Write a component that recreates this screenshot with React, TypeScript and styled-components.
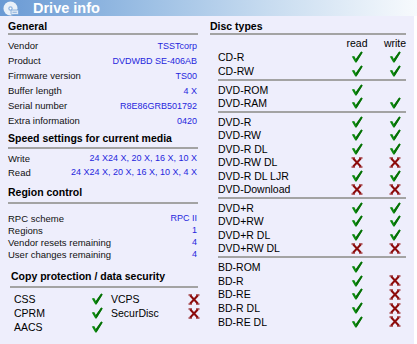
import React from 'react';
import styled, { createGlobalStyle } from 'styled-components';

const Global = createGlobalStyle`
  html, body { margin: 0; padding: 0; background: #eeeefc; }
  body { font-family: "Liberation Sans", Arial, sans-serif; color: #000; }
`;

const Window = styled.div`
  width: 417px;
  height: 344px;
  background: #eeeefc;
  display: flex;
  flex-direction: column;
  overflow: hidden;
`;

const TitleBar = styled.div`
  height: 16px;
  flex: none;
  display: flex;
  align-items: center;
  background: linear-gradient(to right, #6a9ad4 0%, #9cbfe4 35%, #c8dcf0 65%, #f7fafd 100%);
`;

const TitleIcon = styled.svg`
  width: 16px;
  height: 15px;
  margin-left: 3px;
  flex: none;
`;

const Title = styled.span`
  color: #fff;
  font-weight: bold;
  font-size: 14.5px;
  line-height: 16px;
  margin-left: 14px;
`;

const Body = styled.div`
  flex: 1;
  display: flex;
  padding-left: 8px;
  border-right: 3px solid #fff;
`;

const LeftCol = styled.div`
  width: 190px;
  flex: none;
  display: flex;
  flex-direction: column;
`;

const RightCol = styled.div`
  width: 196px;
  margin-left: 12px;
  flex: none;
  display: flex;
  flex-direction: column;
`;

const Heading = styled.div<{ $mt: number; $pb: number; $indent?: number }>`
  font-weight: bold;
  font-size: 10.5px;
  line-height: 14px;
  margin-top: ${(p) => p.$mt}px;
  padding-bottom: ${(p) => p.$pb}px;
  padding-left: ${(p) => p.$indent ?? 0}px;
  border-bottom: 2px solid #a3a3a3;
  white-space: nowrap;
`;

const Rows = styled.div<{ $mt: number }>`
  margin-top: ${(p) => p.$mt}px;
  display: flex;
  flex-direction: column;
`;

const InfoRow = styled.div<{ $h: number }>`
  height: ${(p) => p.$h}px;
  display: flex;
  align-items: center;
  justify-content: space-between;
  white-space: nowrap;
`;

const Label = styled.span`
  font-size: 9.5px;
  color: #111;
`;

const Value = styled.span`
  font-size: 9px;
  color: #2626dc;
  padding-right: 1px;
`;

const CopySection = styled.div`
  padding-left: 2px;
  display: flex;
  flex-direction: column;
`;

const CopyGrid = styled.div`
  margin-top: 4px;
  margin-left: 4px;
  display: grid;
  grid-template-columns: 72px 22px 3px 72px 22px;
  grid-auto-rows: 14px;
  align-items: center;
  font-size: 10.5px;
`;

const IconCell = styled.div`
  display: flex;
  justify-content: center;
  align-items: center;
`;

const DiscGrid = styled.div`
  display: grid;
  grid-template-columns: 128px 22px 16px 22px;
  align-items: center;
  font-size: 10.5px;
`;

const DiscHeader = styled(DiscGrid)`
  margin-top: 1px;
  margin-left: 8px;
  height: 14px;
`;

const ColHead = styled.span<{ $col: number }>`
  grid-column: ${(p) => p.$col};
  text-align: center;
  white-space: nowrap;
  justify-self: center;
`;

const Group = styled.div<{ $first?: boolean; $rh: number }>`
  margin-left: 8px;
  padding-top: ${(p) => (p.$first ? 0 : 2)}px;
  padding-bottom: 1px;
  border-top: ${(p) => (p.$first ? 'none' : '2px solid #a3a3a3')};
  display: grid;
  grid-template-columns: 128px 22px 16px 22px;
  grid-auto-rows: ${(p) => p.$rh}px;
  align-items: center;
  font-size: 10.5px;
`;

const DiscName = styled.span`
  grid-column: 1;
  white-space: nowrap;
`;

const CellRead = styled(IconCell)`
  grid-column: 2;
`;

const CellWrite = styled(IconCell)`
  grid-column: 4;
`;

const Check = () => (
  <svg width="12" height="12" viewBox="0 0 12 12">
    <polygon points="0.8,5.6 3.2,5 4.9,8 10.2,0.6 11.6,1.6 5.4,11.4 4.3,11.4" fill="#0d8a10" />
    <polygon points="4.9,8 10.2,0.6 11.6,1.6 5.4,11.4" fill="#067006" />
  </svg>
);

const Cross = () => (
  <svg width="12" height="11" viewBox="0 0 12 11">
    <g stroke="#8c0b0b" strokeWidth="2" fill="none">
      <line x1="2.2" y1="1.5" x2="9.8" y2="9.5" />
      <line x1="9.8" y1="1.5" x2="2.2" y2="9.5" />
    </g>
    <g stroke="#8c0b0b" strokeWidth="1.2">
      <line x1="0.5" y1="1" x2="4" y2="1" />
      <line x1="8" y1="1" x2="11.5" y2="1" />
      <line x1="0.5" y1="10" x2="4" y2="10" />
      <line x1="8" y1="10" x2="11.5" y2="10" />
    </g>
  </svg>
);

type Mark = 'y' | 'n' | '';
const MarkIcon = ({ m }: { m: Mark }) => (m === 'y' ? <Check /> : m === 'n' ? <Cross /> : null);

const general: [string, string][] = [
  ['Vendor', 'TSSTcorp'],
  ['Product', 'DVDWBD SE-406AB'],
  ['Firmware version', 'TS00'],
  ['Buffer length', '4 X'],
  ['Serial number', 'R8E86GRB501792'],
  ['Extra information', '0420'],
];

const speeds: [string, string][] = [
  ['Write', '24 X24 X, 20 X, 16 X, 10 X'],
  ['Read', '24 X24 X, 20 X, 16 X, 10 X, 4 X'],
];

const region: [string, string][] = [
  ['RPC scheme', 'RPC II'],
  ['Regions', '1'],
  ['Vendor resets remaining', '4'],
  ['User changes remaining', '4'],
];

const groups: { rh: number; rows: [string, Mark, Mark][] }[] = [
  { rh: 14, rows: [['CD-R', 'y', 'y'], ['CD-RW', 'y', 'y']] },
  { rh: 13.5, rows: [['DVD-ROM', 'y', ''], ['DVD-RAM', 'y', 'y']] },
  {
    rh: 13.5,
    rows: [
      ['DVD-R', 'y', 'y'],
      ['DVD-RW', 'y', 'y'],
      ['DVD-R DL', 'y', 'y'],
      ['DVD-RW DL', 'n', 'n'],
      ['DVD-R DL LJR', 'y', 'y'],
      ['DVD-Download', 'n', 'n'],
    ],
  },
  {
    rh: 13.5,
    rows: [
      ['DVD+R', 'y', 'y'],
      ['DVD+RW', 'y', 'y'],
      ['DVD+R DL', 'y', 'y'],
      ['DVD+RW DL', 'n', 'n'],
    ],
  },
  {
    rh: 13.75,
    rows: [
      ['BD-ROM', 'y', ''],
      ['BD-R', 'y', 'n'],
      ['BD-RE', 'y', 'n'],
      ['BD-R DL', 'y', 'n'],
      ['BD-RE DL', 'y', 'n'],
    ],
  },
];

export default function App() {
  return (
    <>
      <Global />
      <Window>
        <TitleBar>
          <TitleIcon viewBox="0 0 16 15">
            <circle cx="7.5" cy="7.5" r="7" fill="#ffffff" fillOpacity="0.85" />
            <circle cx="7.5" cy="7.5" r="2.2" fill="#8fb4e0" />
            <circle cx="7.5" cy="7.5" r="1" fill="#ffffff" />
            <rect x="8" y="9" width="7.5" height="4.5" rx="0.8" fill="#dfe9f6" stroke="#7aa3d6" strokeWidth="0.8" />
            <line x1="9.5" y1="11.3" x2="13.8" y2="11.3" stroke="#7aa3d6" strokeWidth="0.8" />
          </TitleIcon>
          <Title>Drive info</Title>
        </TitleBar>
        <Body>
          <LeftCol>
            <Heading $mt={3} $pb={0}>General</Heading>
            <Rows $mt={3}>
              {general.map(([l, v]) => (
                <InfoRow key={l} $h={15}>
                  <Label>{l}</Label>
                  <Value>{v}</Value>
                </InfoRow>
              ))}
            </Rows>
            <Heading $mt={3} $pb={2}>Speed settings for current media</Heading>
            <Rows $mt={2}>
              {speeds.map(([l, v]) => (
                <InfoRow key={l} $h={14}>
                  <Label>{l}</Label>
                  <Value>{v}</Value>
                </InfoRow>
              ))}
            </Rows>
            <Heading $mt={6} $pb={3}>Region control</Heading>
            <Rows $mt={8}>
              {region.map(([l, v]) => (
                <InfoRow key={l} $h={12}>
                  <Label>{l}</Label>
                  <Value>{v}</Value>
                </InfoRow>
              ))}
            </Rows>
            <CopySection>
              <Heading $mt={9} $pb={3} $indent={1}>Copy protection / data security</Heading>
              <CopyGrid>
                <span>CSS</span>
                <IconCell><Check /></IconCell>
                <span />
                <span>VCPS</span>
                <IconCell><Cross /></IconCell>
                <span>CPRM</span>
                <IconCell><Check /></IconCell>
                <span />
                <span>SecurDisc</span>
                <IconCell><Cross /></IconCell>
                <span>AACS</span>
                <IconCell><Check /></IconCell>
              </CopyGrid>
            </CopySection>
          </LeftCol>
          <RightCol>
            <Heading $mt={3} $pb={0}>Disc types</Heading>
            <DiscHeader>
              <ColHead $col={2}>read</ColHead>
              <ColHead $col={4}>write</ColHead>
            </DiscHeader>
            {groups.map((g, i) => (
              <Group key={i} $first={i === 0} $rh={g.rh}>
                {g.rows.map(([name, r, w]) => (
                  <React.Fragment key={name}>
                    <DiscName>{name}</DiscName>
                    <CellRead><MarkIcon m={r} /></CellRead>
                    <CellWrite><MarkIcon m={w} /></CellWrite>
                  </React.Fragment>
                ))}
              </Group>
            ))}
          </RightCol>
        </Body>
      </Window>
    </>
  );
}
